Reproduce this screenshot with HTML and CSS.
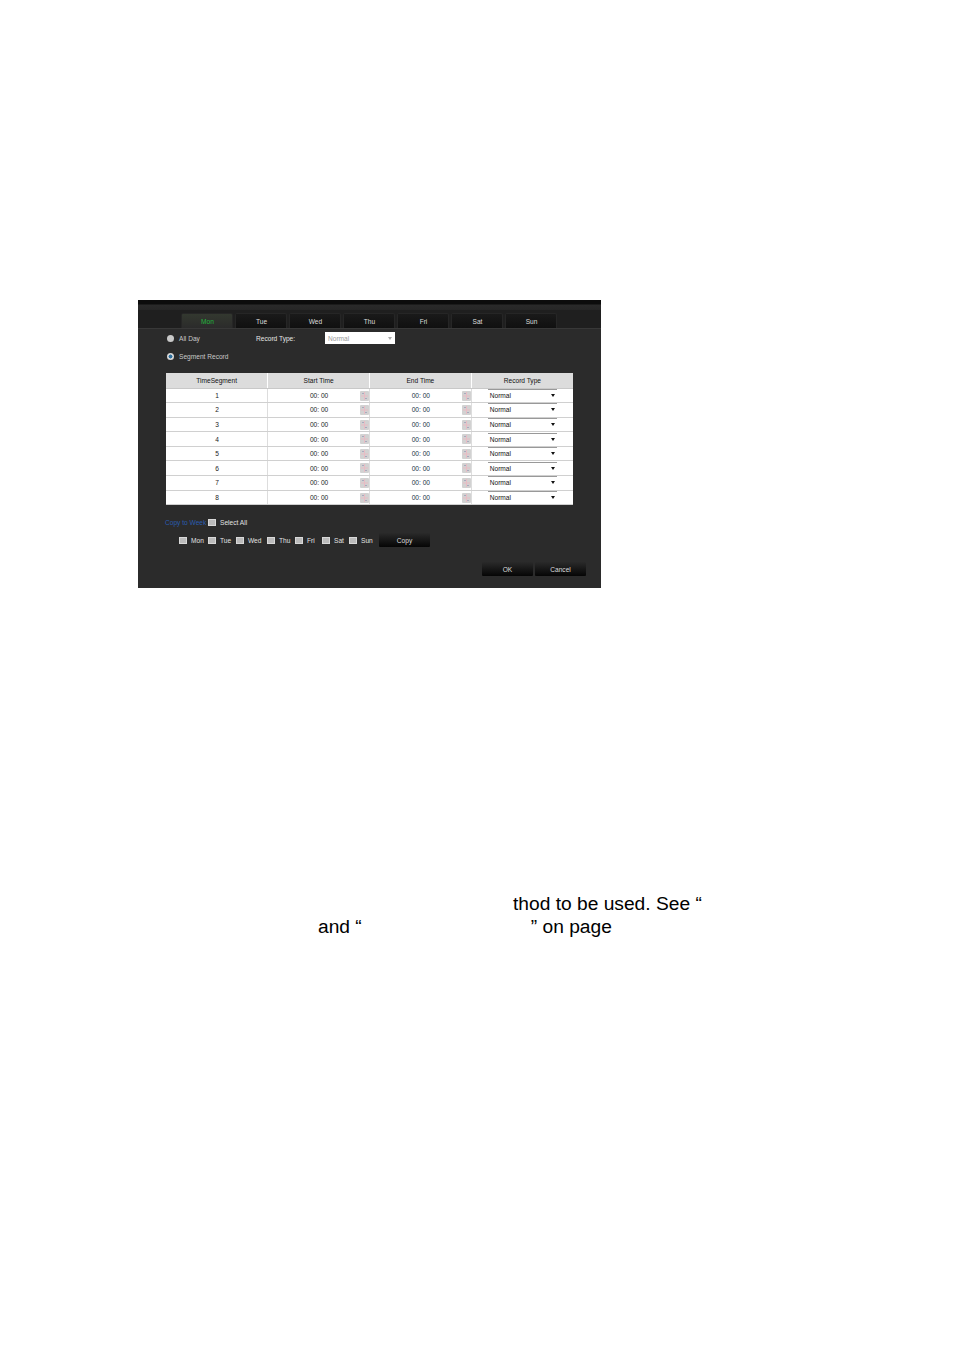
FILE: index.html
```html
<!DOCTYPE html>
<html lang="en">
<head>
    <meta charset="UTF-8">
    <title>Record Schedule</title>
    <link rel="stylesheet" href="styles.css">
</head>
<body>
    <svg class="defs" width="0" height="0">
        <symbol id="clock" viewBox="0 0 9 10">
            <rect width="9" height="10" rx="1" fill="#d2d2d2"/>
            <path d="M1 5h7M4.500 1v8" stroke="#e8bcc4" stroke-width="1"/>
            <path d="M2 2.500h2M5 7.500h2" stroke="#a9a9bd" stroke-width="1"/>
        </symbol>
    </svg>

    <div class="panel">
        <div class="top-bar"></div>
        <div class="tabs">
            <div class="tab active">Mon</div>
            <div class="tab">Tue</div>
            <div class="tab">Wed</div>
            <div class="tab">Thu</div>
            <div class="tab">Fri</div>
            <div class="tab">Sat</div>
            <div class="tab">Sun</div>
        </div>

        <div class="mode-row">
            <span class="radio"></span>
            <span class="mode-label">All Day</span>
            <span class="type-label">Record Type:</span>
            <span class="type-select">Normal<i class="arrow grey"></i></span>
        </div>
        <div class="mode-row second">
            <span class="radio on"></span>
            <span class="mode-label">Segment Record</span>
        </div>

        <table class="segments">
            <thead>
                <tr><th>TimeSegment</th><th>Start Time</th><th>End Time</th><th>Record Type</th></tr>
            </thead>
            <tbody id="rows"></tbody>
        </table>

        <div class="copy-head">
            <span class="copy-link">Copy to Week</span>
            <span class="check"></span>
            <span class="day">Select All</span>
        </div>
        <div class="copy-days">
            <div class="day-item"><span class="check"></span><span class="day">Mon</span></div>
            <div class="day-item"><span class="check"></span><span class="day">Tue</span></div>
            <div class="day-item"><span class="check"></span><span class="day">Wed</span></div>
            <div class="day-item"><span class="check"></span><span class="day">Thu</span></div>
            <div class="day-item"><span class="check"></span><span class="day">Fri</span></div>
            <div class="day-item"><span class="check"></span><span class="day">Sat</span></div>
            <div class="day-item"><span class="check"></span><span class="day">Sun</span></div>
            <button class="btn">Copy</button>
        </div>
        <div class="actions">
            <button class="btn">OK</button>
            <button class="btn">Cancel</button>
        </div>
    </div>

    <div class="doc-text">
        <p class="line-one">thod to be used. See “</p>
        <p class="line-two"><span>and “</span><span>” on page</span></p>
    </div>

    <script>
        // Build the eight segment rows
        const rows = document.getElementById('rows');
        for (let i = 1; i <= 8; i++) {
            const timeCell = '<span class="time">00: 00</span><svg class="clock"><use href="#clock"/></svg>';
            rows.innerHTML += '<tr><td>' + i + '</td><td class="time-cell">' + timeCell + '</td>' +
                '<td class="time-cell end">' + timeCell + '</td>' +
                '<td class="select-cell"><span class="row-select">Normal<i class="arrow"></i></span></td></tr>';
        }
    </script>
</body>
</html>
```

FILE: styles.css
```css
* {
    margin: 0;
    padding: 0;
    box-sizing: border-box;
}

body {
    background: #fff;
    font-family: "Liberation Sans", Arial, sans-serif;
    padding-top: 300px;
}

.defs {
    display: block;
    height: 0;
}

.panel {
    width: 463px;
    height: 288px;
    margin-left: 138px;
    background: #2b2b2b;
    font-size: 6.6px;
    color: #ddd;
}

.top-bar {
    height: 10px;
    background: linear-gradient(#0c0c0c 0, #0c0c0c 4px, #2a2a2a 5px, #262626 100%);
}

.tabs {
    display: flex;
    gap: 2px;
    height: 19px;
    padding: 3px 0 0 43px;
    background: #1f1f1f;
    border-bottom: 1px solid #383838;
}

.tab {
    width: 52px;
    height: 15px;
    padding-left: 1px;
    line-height: 15px;
    text-align: center;
    background: linear-gradient(#1a1a1a, #101010);
    border: 1px solid #262626;
    border-bottom: 0;
    border-radius: 2px 2px 0 0;
    color: #ddd;
}

.tab.active {
    background: linear-gradient(#33382f, #2b2b2b);
    color: #22b83e;
}

.mode-row {
    display: flex;
    align-items: center;
    height: 12px;
    margin-top: 3px;
    padding-left: 29px;
}

.mode-row.second {
    margin-top: 6px;
}

.radio {
    width: 7px;
    height: 7px;
    border-radius: 50%;
    background: #c9c9c9;
}

.radio.on {
    background: radial-gradient(circle, #2d6f9e 0, #2d6f9e 35%, #d5d5d5 45%);
}

.mode-label {
    width: 77px;
    margin-left: 5px;
    color: #c8c8c8;
}

.type-label {
    width: 69px;
    color: #e6e6e6;
}

.type-select {
    position: relative;
    width: 70px;
    height: 12px;
    line-height: 13px;
    padding-left: 3px;
    background: #fff;
    color: #999;
}

.arrow {
    position: absolute;
    right: 2px;
    top: 4px;
    border: 2.500px solid transparent;
    border-top: 3px solid #111;
    border-bottom: 0;
}

.arrow.grey {
    right: 3px;
    top: 5px;
    border-top-color: #aaa;
}

.segments {
    width: 407px;
    margin: 11px 0 0 28px;
    border-collapse: collapse;
    table-layout: fixed;
    background: #fff;
    color: #222;
    border-bottom: 1px solid #555;
}

.segments th {
    height: 15px;
    background: #dcdcdc;
    border-left: 1px solid #fff;
    border-bottom: 1px solid #c8c8c8;
    font-weight: normal;
    color: #111;
}

.segments th:first-child,
.segments td:first-child {
    border-left: 0;
}

.segments td {
    height: 14.600px;
    padding-left: 1px;
    text-align: center;
    border-left: 1px solid #ddd;
    border-bottom: 1px solid #d0d0d0;
}

.time-cell {
    position: relative;
}

.time-cell.end .time {
    color: #14304a;
}

.clock {
    position: absolute;
    right: 0;
    top: 2px;
    width: 9px;
    height: 10px;
}

.segments .select-cell {
    padding: 0 16px;
}

.row-select {
    position: relative;
    display: block;
    height: 13px;
    line-height: 12px;
    padding-left: 2px;
    text-align: left;
    border-top: 1px solid #999;
    color: #111;
}

.copy-head {
    display: flex;
    align-items: center;
    height: 8px;
    margin: 13px 0 0 27px;
}

.copy-link {
    width: 43px;
    color: #2a5cb0;
}

.copy-days {
    display: grid;
    grid-template-columns: 29px 28px 31px 28px 27px 27px 30px auto;
    align-items: center;
    height: 14px;
    margin: 7px 0 0 41px;
}

.day-item {
    display: flex;
    align-items: center;
}

.check {
    width: 8px;
    height: 7px;
    background: #bbb;
    border: 1px solid #d8d8d8;
}

.day {
    margin-left: 4px;
    color: #e2e2e2;
}

.btn {
    width: 51px;
    height: 14px;
    border: 0;
    border-radius: 1px;
    background: linear-gradient(#2a2a2a, #050505);
    color: #ddd;
    font: 6.6px "Liberation Sans", Arial, sans-serif;
}

.actions {
    display: flex;
    justify-content: flex-end;
    gap: 2px;
    margin: 15px 15px 0 0;
}

.doc-text {
    font-size: 19.200px;
    line-height: 23px;
    color: #000;
    margin-top: 304px;
}

.line-one {
    padding-left: 513px;
}

.line-two {
    display: flex;
    gap: 169px;
    padding-left: 318px;
}
```
